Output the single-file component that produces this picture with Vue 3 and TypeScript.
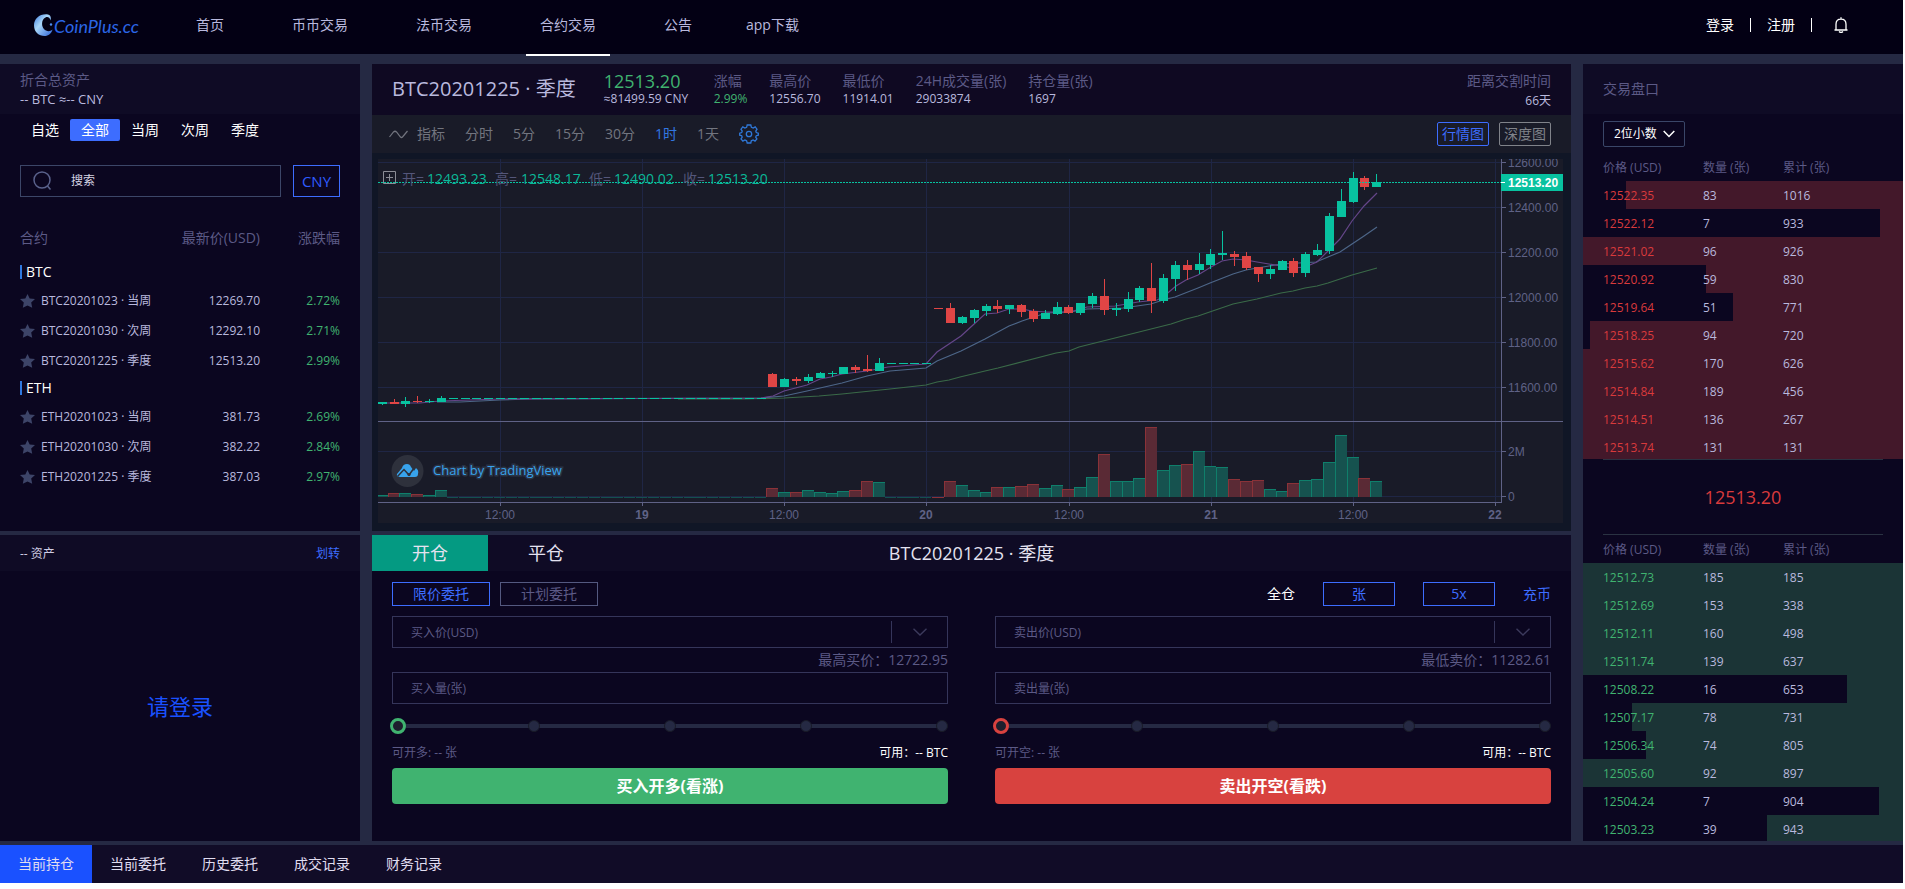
<script setup lang="ts">
import { ref } from 'vue'

interface Contract {
  name: string
  price: string
  change: string
}
interface Level {
  price: string
  amount: number
  total: number
  depth: number
}
interface Side {
  key: string
  price: string
  amount: string
  limitLabel: string
  limit: string
  open: string
  submit: string
}
/* [slot, up, open/close top, bottom, high, low, volume top] */
type Bar = [number, boolean, number, number, number, number, number]

const navItems = ['首页', '币币交易', '法币交易', '合约交易', '公告', 'app下载']
const filters = ['自选', '全部', '当周', '次周', '季度']
const groups: { coin: string; rows: Contract[] }[] = [
  {
    coin: 'BTC',
    rows: [
      { name: 'BTC20201023 · 当周', price: '12269.70', change: '2.72%' },
      { name: 'BTC20201030 · 次周', price: '12292.10', change: '2.71%' },
      { name: 'BTC20201225 · 季度', price: '12513.20', change: '2.99%' },
    ],
  },
  {
    coin: 'ETH',
    rows: [
      { name: 'ETH20201023 · 当周', price: '381.73', change: '2.69%' },
      { name: 'ETH20201030 · 次周', price: '382.22', change: '2.84%' },
      { name: 'ETH20201225 · 季度', price: '387.03', change: '2.97%' },
    ],
  },
]
const stats = [
  { label: '涨幅', value: '2.99%', up: true },
  { label: '最高价', value: '12556.70', up: false },
  { label: '最低价', value: '11914.01', up: false },
  { label: '24H成交量(张)', value: '29033874', up: false },
  { label: '持仓量(张)', value: '1697', up: false },
]
const periods = ['分时', '5分', '15分', '30分', '1时', '1天']

const asks: Level[] = [
  { price: '12522.35', amount: 83, total: 1016, depth: 277 },
  { price: '12522.12', amount: 7, total: 933, depth: 23 },
  { price: '12521.02', amount: 96, total: 926, depth: 320 },
  { price: '12520.92', amount: 59, total: 830, depth: 197 },
  { price: '12519.64', amount: 51, total: 771, depth: 170 },
  { price: '12518.25', amount: 94, total: 720, depth: 313 },
  { price: '12515.62', amount: 170, total: 626, depth: 320 },
  { price: '12514.84', amount: 189, total: 456, depth: 320 },
  { price: '12514.51', amount: 136, total: 267, depth: 320 },
  { price: '12513.74', amount: 131, total: 131, depth: 320 },
]
const bids: Level[] = [
  { price: '12512.73', amount: 185, total: 185, depth: 320 },
  { price: '12512.69', amount: 153, total: 338, depth: 320 },
  { price: '12512.11', amount: 160, total: 498, depth: 320 },
  { price: '12511.74', amount: 139, total: 637, depth: 320 },
  { price: '12508.22', amount: 16, total: 653, depth: 56 },
  { price: '12507.17', amount: 78, total: 731, depth: 271 },
  { price: '12506.34', amount: 74, total: 805, depth: 257 },
  { price: '12505.60', amount: 92, total: 897, depth: 320 },
  { price: '12504.24', amount: 7, total: 904, depth: 24 },
  { price: '12503.23', amount: 39, total: 943, depth: 136 },
]
const depthOf = (l: Level) => ({ '--free': `${100 - (l.depth / 320) * 100}%` })

const sides: Side[] = [
  { key: 'buy', price: '买入价(USD)', amount: '买入量(张)', limitLabel: '最高买价：', limit: '12722.95', open: '可开多: -- 张', submit: '买入开多(看涨)' },
  { key: 'sell', price: '卖出价(USD)', amount: '卖出量(张)', limitLabel: '最低卖价：', limit: '11282.61', open: '可开空: -- 张', submit: '卖出开空(看跌)' },
]
const records = ['当前持仓', '当前委托', '历史委托', '成交记录', '财务记录']
const share = ref<Record<string, number>>({ buy: 0, sell: 0 })

const bars: Bar[] = [
  [-46, true, 402, 404, 402, 405, 495], [-45, false, 402, 404, 399, 404, 493], [-44, true, 401, 404, 397, 407, 493],
  [-43, false, 401, 402, 396, 403, 494], [-42, true, 401, 402, 399, 403, 495], [-41, true, 398, 402, 396, 402, 490],
  [-13, false, 374, 387, 373, 387, 488], [-12, true, 379, 387, 378, 387, 492], [-11, false, 379, 381, 377, 385, 492],
  [-10, true, 377, 381, 374, 383, 490], [-9, true, 373, 378, 372, 378, 492], [-8, true, 373, 374, 371, 377, 493],
  [-7, true, 367, 374, 367, 374, 491], [-6, false, 367, 370, 365, 373, 490], [-5, false, 369, 371, 355, 372, 481],
  [-4, true, 363, 371, 358, 371, 482], [1, false, 308, 309, 308, 309, 497], [2, false, 308, 323, 303, 323, 481],
  [3, true, 317, 323, 316, 324, 485], [4, true, 310, 318, 309, 323, 490], [5, true, 306, 311, 304, 316, 492],
  [6, false, 306, 309, 300, 313, 487], [7, true, 305, 309, 305, 314, 487], [8, false, 305, 312, 304, 317, 486],
  [9, false, 311, 319, 309, 322, 484], [10, true, 313, 319, 310, 319, 488], [11, true, 307, 314, 302, 315, 485],
  [12, false, 307, 313, 305, 314, 489], [13, true, 303, 313, 303, 315, 487], [14, true, 296, 304, 293, 308, 477],
  [15, false, 296, 310, 279, 315, 454], [16, true, 308, 310, 303, 316, 481], [17, true, 299, 309, 292, 312, 481],
  [18, true, 288, 300, 286, 302, 478], [19, false, 288, 301, 263, 313, 427], [20, true, 278, 301, 274, 303, 470],
  [21, true, 265, 279, 261, 291, 465], [22, false, 265, 270, 260, 280, 464], [23, true, 264, 270, 253, 274, 451],
  [24, true, 254, 265, 249, 269, 466], [25, true, 253, 255, 231, 260, 467], [26, false, 254, 257, 251, 266, 479],
  [27, false, 256, 268, 252, 270, 481], [28, false, 267, 274, 267, 282, 480], [29, true, 269, 274, 265, 279, 489],
  [30, true, 261, 270, 260, 270, 491], [31, false, 261, 273, 258, 277, 483], [32, true, 254, 273, 252, 277, 480],
  [33, true, 250, 255, 244, 256, 479], [34, true, 216, 251, 213, 254, 462], [35, true, 201, 217, 189, 217, 435],
  [36, true, 178, 202, 172, 203, 457], [37, false, 178, 187, 176, 190, 478], [38, true, 182, 187, 174, 187, 481],
]
const flats: { slot: number; y: number }[] = []
for (let s = -40; s <= -14; s++) flats.push({ slot: s, y: 398 })
for (let s = -3; s <= 0; s++) flats.push({ slot: s, y: 363 })

const step = 11.84
const slotX = (slot: number) => Math.round(926.3 + slot * step)

const priceTicks = [
  { y: 162, label: '12600.00' }, { y: 207, label: '12400.00' }, { y: 252, label: '12200.00' }, { y: 297, label: '12000.00' },
  { y: 342, label: '11800.00' }, { y: 387, label: '11600.00' }, { y: 451, label: '2M' }, { y: 496, label: '0' },
]
const timeTicks = [
  { x: 500, label: '12:00' }, { x: 642, label: '19' }, { x: 784, label: '12:00' }, { x: 926, label: '20' },
  { x: 1069, label: '12:00' }, { x: 1211, label: '21' }, { x: 1353, label: '12:00' }, { x: 1495, label: '22' },
]
const fast = '378,403 420,403 440,401 500,399 761,398 773,396 784,391 807,385 820,379 831,377 842,374 867,371 888,367 926,364 937,352 949,344 961,336 973,325 985,314 997,313 1009,309 1022,309 1032,311 1046,312 1070,312 1087,307 1115,306 1138,302 1157,300 1163,297 1176,286 1186,280 1198,275 1211,267 1222,261 1233,259 1246,260 1257,262 1269,264 1281,266 1293,268 1305,267 1317,262 1328,251 1340,239 1352,221 1364,206 1377,193'
const mid = '437,402 460,402 500,400 530,399 761,398 784,396 807,391 820,388 842,383 867,376 890,371 926,368 937,361 949,356 961,351 973,345 985,339 1009,326 1022,321 1034,317 1046,313 1070,312 1087,309 1123,308 1137,306 1151,304 1163,300 1175,297 1198,288 1210,283 1233,274 1246,270 1257,268 1269,266 1281,264 1316,262 1328,257 1340,252 1352,244 1364,236 1377,227'
const slow = '678,399 743,399 784,398 819,396 842,394 890,389 926,385 937,382 949,380 960,377 985,371 998,368 1056,353 1069,351 1079,347 1127,335 1171,324 1186,319 1198,316 1233,304 1257,299 1281,293 1293,291 1305,288 1317,286 1328,283 1352,275 1377,268'
</script>

<template>
  <div class="page">
    <header class="top">
      <a class="logo" href="#">
        <svg width="20" height="22" viewBox="0 0 20 22" aria-hidden="true">
          <defs>
            <linearGradient id="moon" x1="0" y1="0" x2="1" y2="1">
              <stop offset="0" stop-color="#3c7be0" />
              <stop offset="0.4" stop-color="#a9d6f8" />
              <stop offset="1" stop-color="#2c63d8" />
            </linearGradient>
          </defs>
          <path d="M14 0.5C6 -0.5 0 4.500 0 11.500C0 18 5 22 10.500 22C14.500 22 17.500 19.500 18.500 15.500C16 18 12 17.500 10 15C7 11.500 7.500 5.500 11.500 3.500C14 2.300 16 4 16.500 6.500C17.500 3.500 16.500 1 14 0.500Z" fill="url(#moon)" />
          <circle cx="17" cy="10.500" r="1.200" fill="#4f8df0" />
        </svg>
        <span>CoinPlus.cc</span>
      </a>
      <nav class="nav">
        <a v-for="item in navItems" :key="item" href="#" :class="{ active: item === '合约交易', last: item === 'app下载' }">{{ item }}</a>
      </nav>
      <div class="account">
        <a href="#">登录</a>
        <i></i>
        <a href="#">注册</a>
        <i></i>
        <button type="button" class="bell" aria-label="通知">
          <svg width="14" height="16" viewBox="0 0 14 16" fill="none" stroke="#fff" stroke-width="1.300">
            <path d="M0.500 13H13.500M2 13V7.200C2 4.200 4 2.200 7 2.200S12 4.200 12 7.200V13M7 0.200V2.200M5 14.500Q7 16.300 9 14.500" />
          </svg>
        </button>
      </div>
    </header>

    <main class="grid">
      <section class="market">
        <div class="assets">
          <p>折合总资产</p>
          <p class="sum">-- BTC ≈-- CNY</p>
        </div>
        <div class="filters">
          <button v-for="f in filters" :key="f" type="button" :class="{ on: f === '全部' }">{{ f }}</button>
        </div>
        <div class="search">
          <label>
            <svg width="19" height="20" viewBox="0 0 19 20" fill="none" stroke="#5a628c" stroke-width="1.500">
              <ellipse cx="9" cy="9" rx="8" ry="8" />
              <path d="M14.300 14.800L17.500 18.500" />
            </svg>
            <input type="text" placeholder="搜索" aria-label="搜索" />
          </label>
          <button type="button">CNY</button>
        </div>
        <table class="contracts">
          <thead>
            <tr><th>合约</th><th class="c-price">最新价(USD)</th><th class="c-change">涨跌幅</th></tr>
          </thead>
          <tbody v-for="g in groups" :key="g.coin">
            <tr class="coin"><th colspan="3"><span>{{ g.coin }}</span></th></tr>
            <tr v-for="r in g.rows" :key="r.name">
              <td>
                <div class="name">
                  <svg width="15" height="14" viewBox="0 0 15 14" fill="#3d4468"><path d="M7.500 0L9.700 4.400L15 5.100L11.200 8.600L12.200 13.800L7.500 11.500L2.800 13.800L3.800 8.600L0 5.100L5.300 4.400Z" /></svg>
                  {{ r.name }}
                </div>
              </td>
              <td>{{ r.price }}</td>
              <td class="up">{{ r.change }}</td>
            </tr>
          </tbody>
        </table>
      </section>

      <section class="quote">
        <div class="summary">
          <h1>BTC20201225 · 季度</h1>
          <div class="last">
            <strong>12513.20</strong>
            <span>≈81499.59 CNY</span>
          </div>
          <dl v-for="s in stats" :key="s.label">
            <dt>{{ s.label }}</dt>
            <dd :class="{ up: s.up }">{{ s.value }}</dd>
          </dl>
          <dl class="expiry">
            <dt>距离交割时间</dt>
            <dd>66天</dd>
          </dl>
        </div>
        <div class="toolbar">
          <button type="button" class="indicator">
            <svg width="19" height="9" viewBox="0 0 19 9" fill="none" stroke="#72757f" stroke-width="1.200"><path d="M0.500 7L4.500 2Q6 0.500 7.500 2L11.500 7Q12.500 8 13.500 7L18.500 1" /></svg>
            指标
          </button>
          <button v-for="p in periods" :key="p" type="button" :class="{ on: p === '1时' }">{{ p }}</button>
          <button type="button" class="gear" aria-label="设置">
            <svg width="20" height="20" viewBox="0 0 20 20" fill="none" stroke="#2f78d8" stroke-width="1.300">
              <path d="M8.200 1H11.800L12.400 3.300L14.200 4.100L16.200 2.900L18 5.200L16.800 7.100L17.300 8.500L19.300 9.200V11.200L17.300 11.700L16.700 13.100L17.900 15L16 17.100L14.100 16L12.300 16.800L11.800 19H8.200L7.600 16.800L5.900 16L3.900 17.100L2 15L3.200 13.100L2.700 11.700L0.700 11.200V9.200L2.700 8.500L3.200 7.100L2 5.200L3.800 2.900L5.900 4.100L7.600 3.300Z" />
              <circle cx="10" cy="10" r="2.700" />
            </svg>
          </button>
          <span class="spacer"></span>
          <button type="button" class="view on">行情图</button>
          <button type="button" class="view">深度图</button>
        </div>
        <div class="chart">
          <svg viewBox="378 159 1185 364" role="img" aria-label="BTC20201225 1时">
            <rect x="378" y="159" width="1185" height="364" fill="#191b28" />
            <g stroke="#1f2645" shape-rendering="crispEdges">
              <path v-for="t in priceTicks" :key="t.y" :d="`M378 ${t.y + 0.5}H1501`" />
              <path v-for="t in timeTicks" :key="t.x" :d="`M${t.x + 0.5} 159V502`" />
            </g>
            <g shape-rendering="crispEdges">
              <rect v-for="f in flats" :key="f.slot" :x="slotX(f.slot) - 6" y="497" width="11" height="1" fill="#14504f" />
              <template v-for="b in bars" :key="b[0]">
                <rect :x="slotX(b[0]) - 6" :y="b[6]" width="12" :height="Math.max(497 - b[6], 1)" :fill="b[1] ? '#0f7f6b' : '#8a3238'" />
                <rect v-if="b[6] < 496" :x="slotX(b[0]) - 5" :y="b[6] + 1" width="11" :height="496 - b[6]" :fill="b[1] ? '#16524f' : '#5a2a35'" />
              </template>
            </g>
            <g fill="none" stroke-width="1.200">
              <polyline :points="slow" stroke="#3a6a48" />
              <polyline :points="mid" stroke="#4d6688" />
              <polyline :points="fast" stroke="#654689" />
            </g>
            <g shape-rendering="crispEdges">
              <rect v-for="f in flats" :key="f.slot" :x="slotX(f.slot) - 4" :y="f.y" width="9" height="1" fill="#08c2a0" />
            </g>
            <g v-for="b in bars" :key="b[0]" :fill="b[1] ? '#08c2a0' : '#e04545'" shape-rendering="crispEdges">
              <rect :x="slotX(b[0])" :y="b[4]" width="1" :height="b[5] - b[4]" />
              <rect :x="slotX(b[0]) - 4" :y="b[2]" width="9" :height="b[3] - b[2]" />
            </g>
            <g stroke="#5f6286" shape-rendering="crispEdges">
              <path d="M378 421.500H1563M378 502.500H1502M1501.500 159V502" />
              <path v-for="t in priceTicks" :key="t.y" :d="`M1502 ${t.y + 0.5}h4`" />
              <path v-for="t in timeTicks" :key="t.x" :d="`M${t.x + 0.5} 503v3`" />
            </g>
            <g class="axis">
              <text v-for="t in priceTicks" :key="t.y" x="1508" :y="t.y + 5">{{ t.label }}</text>
              <text v-for="t in timeTicks" :key="t.x" :x="t.x" y="519" text-anchor="middle" :class="{ day: t.label.length === 2 }">{{ t.label }}</text>
            </g>
            <path d="M378 182.500H1501" stroke="#08c2a0" stroke-dasharray="2 1" shape-rendering="crispEdges" />
            <rect x="1501" y="174" width="62" height="17" fill="#08c2a0" />
            <path d="M1501 182.500h4" stroke="#fff" />
            <text class="tag" x="1508" y="187">12513.20</text>
            <path d="M383.500 171.500h12v12h-12zM386 177.500h7M389.500 174v7" fill="none" stroke="#8b8d96" />
            <g class="legend">
              <text x="402" y="184">开=<tspan x="427">12493.23</tspan></text>
              <text x="495" y="184">高=<tspan x="521">12548.17</tspan></text>
              <text x="589" y="184">低=<tspan x="614">12490.02</tspan></text>
              <text x="683" y="184">收=<tspan x="708">12513.20</tspan></text>
            </g>
            <circle cx="407.500" cy="471" r="16" fill="#2e313c" />
            <path d="M397 474L402 468Q403 464 407 464Q410 464 411 467L414 471L416 468Q419 470 418 474Q418 477 415 477H400Q396 477 397 474Z" fill="#38a3ec" />
            <path d="M397.500 476.500L404 469.500L409 475L414.500 467.500" fill="none" stroke="#2e313c" stroke-width="1.500" />
            <circle cx="409" cy="474.500" r="1.600" fill="#2e313c" />
            <text class="brand" x="433" y="475">Chart by TradingView</text>
          </svg>
        </div>
      </section>

      <aside class="book">
        <h2>交易盘口</h2>
        <div class="digits">
          <select aria-label="小数位数"><option>2位小数</option></select>
          <svg width="12" height="8" viewBox="0 0 12 8" fill="none" stroke="#fff" stroke-width="1.500"><path d="M0.700 0.900L6 6.500L11.300 0.900" /></svg>
        </div>
        <table class="levels asks">
          <thead><tr><th>价格 (USD)</th><th>数量 (张)</th><th>累计 (张)</th></tr></thead>
        </table>
        <div class="clip">
          <table class="levels asks">
            <tbody>
              <tr v-for="l in asks" :key="l.price" :style="depthOf(l)"><td>{{ l.price }}</td><td>{{ l.amount }}</td><td>{{ l.total }}</td></tr>
            </tbody>
          </table>
        </div>
        <p class="now">12513.20</p>
        <table class="levels bids">
          <thead><tr><th>价格 (USD)</th><th>数量 (张)</th><th>累计 (张)</th></tr></thead>
        </table>
        <div class="clip">
          <table class="levels bids">
            <tbody>
              <tr v-for="l in bids" :key="l.price" :style="depthOf(l)"><td>{{ l.price }}</td><td>{{ l.amount }}</td><td>{{ l.total }}</td></tr>
            </tbody>
          </table>
        </div>
      </aside>

      <section class="wallet">
        <div class="wallet-head"><span>-- 资产</span><a href="#">划转</a></div>
        <div class="wallet-body"><a href="#">请登录</a></div>
      </section>

      <section class="trade">
        <div class="trade-head">
          <button type="button" class="on">开仓</button>
          <button type="button">平仓</button>
          <h2>BTC20201225 · 季度</h2>
        </div>
        <div class="trade-body">
          <div class="modes">
            <button type="button" class="mode on">限价委托</button>
            <button type="button" class="mode">计划委托</button>
            <span class="spacer"></span>
            <span class="cross">全仓</span>
            <button type="button" class="unit">张</button>
            <button type="button" class="unit">5x</button>
            <a href="#">充币</a>
          </div>
          <div class="forms">
            <form v-for="s in sides" :key="s.key" :class="s.key" @submit.prevent>
              <div class="field">
                <input type="text" :placeholder="s.price" :aria-label="s.price" />
                <button type="button" aria-label="选择价格">
                  <svg width="14" height="8" viewBox="0 0 14 8" fill="none" stroke="#3c3a5c" stroke-width="1.400"><path d="M0.500 0.700L7 7L13.500 0.700" /></svg>
                </button>
              </div>
              <p class="limit">{{ s.limitLabel }}{{ s.limit }}</p>
              <div class="field">
                <input type="text" :placeholder="s.amount" :aria-label="s.amount" />
              </div>
              <div class="slider">
                <div class="dots"><i v-for="n in 5" :key="n"></i></div>
                <input v-model.number="share[s.key]" type="range" min="0" max="100" :aria-label="s.amount" />
              </div>
              <div class="avail"><span>{{ s.open }}</span><span class="free">可用：-- BTC</span></div>
              <button type="submit" class="submit">{{ s.submit }}</button>
            </form>
          </div>
        </div>
      </section>
    </main>

    <nav class="records">
      <button v-for="r in records" :key="r" type="button" :class="{ on: r === '当前持仓' }">{{ r }}</button>
    </nav>
  </div>
</template>

<style>
body {
  margin: 0;
  background: #fff;
}
</style>

<style scoped>
.page,
.page * {
  box-sizing: border-box;
}
.page {
  margin-right: 2px;
  background: #252943;
  color: #b9b9de;
  font: 12px/16px "Open Sans", "Noto Sans CJK SC", sans-serif;
}
button,
input,
select {
  font: inherit;
  color: inherit;
  background: none;
  border: 0;
  padding: 0;
  margin: 0;
  border-radius: 0;
  outline: 0;
}
p, h1, h2, dl, dd {
  margin: 0;
  font-weight: 400;
}
a {
  color: inherit;
  text-decoration: none;
}
svg {
  display: block;
  flex: none;
}
table {
  border-collapse: collapse;
  table-layout: fixed;
  width: 100%;
}
th,
td {
  padding: 0;
  font-weight: 400;
  text-align: left;
}
.up {
  color: #40b370;
}
.spacer {
  flex: 1;
}

/* header */
.top {
  display: flex;
  align-items: center;
  height: 54px;
  padding: 0 55px 0 34px;
  background: #030014;
  font-size: 14px;
}
.logo {
  display: flex;
  width: 148px;
  height: 22px;
  margin-bottom: 4px;
  color: #2b66e6;
  font: italic 18px/24px Lato, sans-serif;
}
.nav {
  display: flex;
  align-self: stretch;
  gap: 40px;
}
.nav a {
  display: flex;
  align-items: center;
  height: 56px;
  padding: 0 14px 4px;
  border-bottom: 2px solid transparent;
}
.nav .active {
  border-color: #fff;
}
.nav .last {
  padding-left: 0;
}
.account {
  display: flex;
  align-items: center;
  gap: 16px;
  margin: 0 0 4px auto;
  color: #fff;
}
.account i {
  width: 1px;
  height: 14px;
  background: #fff;
}
.bell {
  margin-left: 6px;
}

/* layout */
.grid {
  display: grid;
  grid-template-columns: 360px minmax(0, 1fr) 320px;
  gap: 4px 12px;
  padding: 10px 0 4px;
}
.grid > * {
  background: #0b0620;
}

/* market list */
.assets {
  height: 50px;
  padding: 6px 20px 0;
  background: #0f0b25;
  color: #5c5a86;
  font-size: 14px;
  line-height: 20px;
}
.assets .sum {
  color: #b9b9de;
  font-size: 13px;
  line-height: 18px;
}
.filters {
  display: flex;
  padding: 5px 20px 0;
}
.filters button {
  width: 50px;
  height: 22px;
  border-radius: 2px;
  color: #fff;
  font-size: 14px;
}
.filters .on {
  background: #3d6dff;
}
.search {
  display: flex;
  gap: 12px;
  padding: 24px 20px 20px;
}
.search label {
  display: flex;
  flex: 1;
  align-items: center;
  gap: 19px;
  height: 32px;
  padding: 0 12px;
  border: 1px solid #3c4668;
}
.search input {
  flex: 1;
  min-width: 0;
}
.search input::placeholder {
  color: #d6d4e4;
}
.search > button {
  width: 47px;
  border: 1px solid #3d6dff;
  color: #2f5cff;
  font-size: 15px;
}
.contracts {
  margin: 0 20px;
  width: calc(100% - 40px);
}
.contracts thead th {
  height: 42px;
  color: #5c5a86;
  font-size: 14px;
}
.contracts .c-price {
  width: 100px;
}
.contracts .c-change {
  width: 80px;
}
.contracts tr > :nth-child(n + 2) {
  text-align: right;
}
.contracts td {
  height: 30px;
  padding-top: 1px;
}
.coin th {
  height: 26px;
}
.coin span {
  display: block;
  padding-left: 4px;
  border-left: 2px solid #2f78e0;
  color: #fff;
  font-size: 14px;
  line-height: 14px;
}
.name {
  display: flex;
  align-items: center;
  gap: 6px;
  white-space: nowrap;
}

/* quote */
.summary {
  display: flex;
  gap: 22px;
  height: 51px;
  padding: 7px 20px 0;
  background: #0f0922;
  white-space: nowrap;
}
.summary h1 {
  margin-right: 6px;
  font-size: 20px;
  line-height: 36px;
}
.last {
  width: 88px;
}
.last strong {
  display: block;
  color: #40b370;
  font-size: 18px;
  font-weight: 400;
  line-height: 20px;
}
.last span {
  display: block;
}
.summary dt {
  color: #5c5a86;
  font-size: 14px;
  line-height: 20px;
}
.summary dd {
  line-height: 16px;
}
.summary .expiry {
  margin-left: auto;
  text-align: right;
}
.expiry dd {
  line-height: 20px;
}
.toolbar {
  display: flex;
  align-items: center;
  gap: 20px;
  height: 38px;
  padding: 0 20px 0 17px;
  background: #191b28;
  color: #72757f;
  font-size: 14px;
}
.toolbar .on {
  color: #3277e0;
}
.indicator {
  display: flex;
  align-items: center;
  gap: 9px;
}
.toolbar .view {
  width: 52px;
  height: 24px;
  border: 1px solid #80838a;
  border-radius: 2px;
  color: #80838a;
}
.toolbar .view.on {
  margin-right: -10px;
  border-color: #3d6dff;
  color: #3d6dff;
}
.chart {
  padding: 6px 8px 8px 6px;
  background: #101626;
}
.chart svg {
  width: 100%;
  height: auto;
}
.axis {
  fill: #5f6286;
  font: 12px "Liberation Sans", sans-serif;
}
.axis .day {
  font-weight: 700;
}
.tag {
  fill: #fff;
  font: 700 12px "Liberation Sans", sans-serif;
}
.legend {
  fill: #54567a;
  font-size: 14px;
}
.legend tspan {
  fill: #0bb898;
}
.brand {
  fill: #38a3ec;
  stroke: #2a3345;
  stroke-width: 3px;
  paint-order: stroke;
  font-size: 13px;
}

/* order book */
.book {
  grid-column: 3;
  grid-row: 1 / 3;
}
.book h2 {
  height: 50px;
  padding-left: 20px;
  background: #0f0b25;
  color: #5c5a86;
  font-size: 14px;
  line-height: 50px;
}
.digits {
  display: flex;
  align-items: center;
  width: 82px;
  height: 26px;
  margin: 7px 20px 8px;
  padding-right: 9px;
  border: 1px solid #3a4668;
  border-radius: 2px;
  color: #fff;
}
.digits select {
  flex: 1;
  min-width: 0;
  height: 24px;
  padding-left: 10px;
  appearance: none;
}
.levels th:nth-child(1),
.levels td:nth-child(1) {
  width: 120px;
  padding-left: 20px;
}
.levels th:nth-child(2),
.levels td:nth-child(2) {
  width: 80px;
}
.levels th {
  height: 26px;
  color: #5c5a86;
}
.levels td {
  height: 28px;
  padding-top: 1px;
}
.levels tbody tr {
  background: linear-gradient(to right, transparent var(--free), var(--bar) var(--free));
}
.levels td:first-child {
  color: var(--ink);
}
.asks {
  --bar: #43182a;
  --ink: #d93a3c;
}
.bids {
  --bar: #1b3436;
  --ink: #40b370;
}
.bids th {
  height: 28px;
  padding-top: 1px;
}
.clip {
  height: 278px;
  overflow: hidden;
}
.now {
  margin: 0 20px;
  border: solid #2a3242;
  border-width: 1px 0;
  color: #d93a3c;
  font-size: 18px;
  line-height: 74px;
  text-align: center;
}

/* wallet */
.wallet {
  display: flex;
  flex-direction: column;
}
.wallet-head {
  display: flex;
  align-items: center;
  justify-content: space-between;
  height: 36px;
  padding: 2px 20px 0;
  background: #0f0b25;
  color: #cfcde4;
}
.wallet-head a {
  color: #3d6dff;
}
.wallet-body {
  display: flex;
  flex: 1;
  align-items: center;
  justify-content: center;
  color: #1a51ff;
  font-size: 22px;
}

/* trade form */
.trade-head {
  display: flex;
  position: relative;
  height: 36px;
  background: #0f0b25;
  color: #e4e2f0;
  font-size: 18px;
}
.trade-head button {
  width: 116px;
}
.trade-head .on {
  background: #049a82;
}
.trade-head h2 {
  position: absolute;
  inset: 0;
  font-size: 18px;
  line-height: 36px;
  text-align: center;
  pointer-events: none;
}
.trade-body {
  padding: 11px 20px 37px;
}
.modes {
  display: flex;
  align-items: center;
  gap: 10px;
  color: #3d6dff;
  font-size: 14px;
}
.mode {
  width: 98px;
  height: 24px;
  border: 1px solid #545980;
  color: #5c5a86;
}
.mode.on {
  border-color: #3d6dff;
  color: #3d6dff;
}
.cross {
  margin-right: -10px;
  color: #fff;
}
.unit {
  width: 72px;
  height: 24px;
  margin-left: 28px;
  border: 1px solid #3d6dff;
}
.cross + .unit {
  margin-right: -10px;
}
.unit + .unit {
  margin-right: 18px;
}
.forms {
  display: grid;
  grid-template-columns: 1fr 1fr;
  gap: 47px;
  padding-top: 10px;
}
.field {
  display: flex;
  height: 32px;
  border: 1px solid #35355a;
}
.field input {
  flex: 1;
  min-width: 0;
  padding: 1px 18px 0;
}
.field input::placeholder {
  color: #5c5a86;
}
.field button {
  display: flex;
  align-items: center;
  justify-content: center;
  width: 56px;
  margin: 4px 0;
  border-left: 1px solid #35355a;
}
.limit {
  color: #5c5a86;
  font-size: 14px;
  line-height: 24px;
  text-align: right;
}
.slider {
  position: relative;
  height: 16px;
  margin: 14px -2px 0;
}
.dots {
  display: flex;
  align-items: center;
  justify-content: space-between;
  height: 16px;
  margin: 0 2px;
  background: linear-gradient(#252943, #252943) center / calc(100% - 12px) 4px no-repeat;
}
.dots i {
  width: 12px;
  height: 12px;
  border: 1px solid #191b28;
  border-radius: 50%;
  background: #252943;
}
.slider input {
  position: absolute;
  inset: 0;
  width: 100%;
  height: 16px;
  appearance: none;
}
.slider input::-webkit-slider-thumb {
  width: 16px;
  height: 16px;
  border: 3px solid var(--tone);
  border-radius: 50%;
  background: #1d1f2d;
  appearance: none;
}
.buy {
  --tone: #40b370;
}
.sell {
  --tone: #d8423f;
}
.avail {
  display: flex;
  justify-content: space-between;
  padding: 11px 0 7px;
  color: #5c5a86;
}
.free {
  color: #fff;
}
.submit {
  width: 100%;
  height: 36px;
  border-radius: 4px;
  background: var(--tone);
  color: #fff;
  font-size: 16px;
  font-weight: 700;
}

/* bottom tabs */
.records {
  display: flex;
  height: 38px;
  background: #110c27;
  color: #e0ddf0;
  font-size: 14px;
}
.records button {
  width: 92px;
}
.records .on {
  background: #1a51ff;
}
</style>
